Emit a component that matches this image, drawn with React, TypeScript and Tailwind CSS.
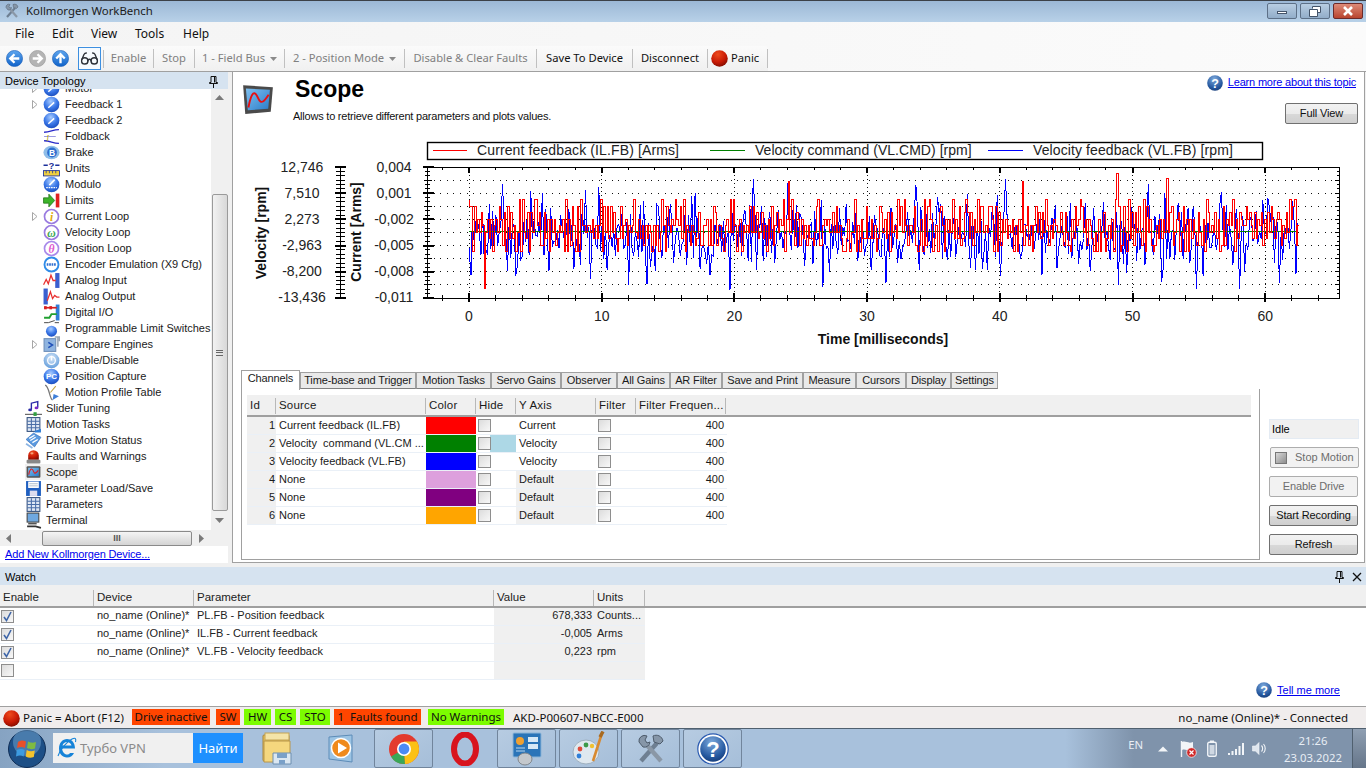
import React from 'react'
import { Glasses } from 'lucide-react'

const SANS = "font-['Liberation_Sans',sans-serif]"
const UI = "font-['Noto_Sans',sans-serif]"

// seeded noise so the traces stay the same between runs
function makeRand(seed: number) {
  let a = seed
  return () => {
    a |= 0
    a = (a + 0x6d2b79f5) | 0
    let t = Math.imul(a ^ (a >>> 15), 1 | a)
    t = (t + Math.imul(t ^ (t >>> 7), 61 | t)) ^ t
    return ((t ^ (t >>> 14)) >>> 0) / 4294967296
  }
}

const X0 = 469
const PX_MS = 13.27
const END = 1298

function buildTraces() {
  const r = makeRand(77)
  const gauss = () => (r() + r() + r() + r() - 2) * 1.73
  let red = 'M469 200'
  let blue = 'M469 248 L470 262 L471 275'
  let redSide = 1
  let blueSide = 1
  for (let x = 471; x < END; x += 1.66) {
    if (r() < 0.8) redSide = -redSide
    let level = Math.round(-0.6 + redSide * Math.abs(gauss()) * 2.6)
    level = Math.max(-5, Math.min(3, level))
    let yr = 232 + level * 6.5
    const s = r()
    if (s < 0.008) yr = 173 + r() * 10
    else if (s < 0.014) yr = 268 + r() * 25
    red += ` V${yr.toFixed(1)} H${(x + 1.66).toFixed(1)}`
    if (r() < 0.7) blueSide = -blueSide
    let yb = 234 + blueSide * Math.abs(gauss()) * 20
    const q = r()
    if (q < 0.02) yb = 268 + r() * 25
    else if (q < 0.03) yb = 174 + r() * 22
    yb = Math.max(174, Math.min(293, yb))
    blue += ` L${x.toFixed(1)} ${yb.toFixed(1)}`
  }
  return { red, blue }
}

const traces = buildTraces()

function Chart() {
  const left = 427, right = 1339, top = 167, bottom = 298
  const step = (bottom - top) / 10
  const ySteps = Array.from({ length: 11 }, (_, i) => top + i * step)
  const xMajor = [0, 10, 20, 30, 40, 50, 60].map((v) => X0 + v * PX_MS)
  const xMinor = Array.from({ length: 35 }, (_, i) => X0 + (i - 1) * 2 * PX_MS).filter((x) => x < right)
  const fine = Array.from({ length: 60 }, (_, i) => top + (i * (bottom - top)) / 30).filter((y) => y <= bottom)
  const vel = ['12,746', '7,510', '2,273', '-2,963', '-8,200', '-13,436']
  const cur = ['0,004', '0,001', '-0,002', '-0,005', '-0,008', '-0,011']
  return (
    <svg width="1130" height="225" viewBox="233 130 1130 225" className={`block ${SANS}`}>
      {/* legend */}
      <rect x="427.5" y="142.5" width="835" height="17" fill="white" stroke="black" strokeWidth="1.4" />
      <path d="M433 150.5H467" stroke="#ff0000" />
      <text x="477" y="155" fontSize="14" letterSpacing="0.12" fill="#222">Current feedback (IL.FB) [Arms]</text>
      <path d="M710 150.5H745" stroke="#008000" />
      <text x="755" y="155" fontSize="14" letterSpacing="0.04" fill="#222">Velocity command (VL.CMD) [rpm]</text>
      <path d="M988 150.5H1023" stroke="#0000ff" />
      <text x="1033" y="155" fontSize="14" letterSpacing="0.1" fill="#222">Velocity feedback (VL.FB) [rpm]</text>

      {/* y axis labels */}
      {vel.map((v, i) => (
        <text key={v} x="302" y={top + 5 + i * 26} fontSize="14" textAnchor="middle" fill="#222">{v}</text>
      ))}
      {cur.map((v, i) => (
        <text key={v} x="394" y={top + 5 + i * 26} fontSize="14" textAnchor="middle" fill="#222">{v}</text>
      ))}
      <text transform="translate(266 233) rotate(-90)" fontSize="14" fontWeight="bold" textAnchor="middle" fill="#111">Velocity [rpm]</text>
      <text transform="translate(361 232) rotate(-90)" fontSize="14" fontWeight="bold" textAnchor="middle" fill="#111">Current [Arms]</text>

      {/* velocity axis */}
      <g stroke="black" shapeRendering="crispEdges">
        <path d={`M340.5 ${top}V${bottom}`} />
        {fine.map((y, i) => (
          <path key={i} d={`M${i % 6 === 0 ? 335 : 336} ${y}H${i % 6 === 0 ? 346 : 345}`} strokeWidth={i % 6 === 0 ? 2 : 1} />
        ))}
      </g>

      {/* grid */}
      <g stroke="#111" shapeRendering="crispEdges">
        {ySteps.slice(1, -1).map((y) => (
          <path key={y} d={`M${left} ${y}H${right}`} strokeDasharray="1 5.6" />
        ))}
        {xMajor.map((x) => (
          <path key={x} d={`M${x} ${top}V${bottom}`} strokeDasharray="1 3" />
        ))}
      </g>

      {/* traces */}
      <g fill="none" strokeLinejoin="miter" shapeRendering="crispEdges">
        <path d={traces.blue} stroke="#0000ff" />
        <path d={`M${X0} 231.5H${END}`} stroke="#008000" />
        <path d={traces.red} stroke="#ff0000" />
      </g>

      {/* frame and ticks */}
      <g stroke="black" shapeRendering="crispEdges">
        <path d={`M423 ${top}.5H${right}.5V${bottom}.5H423`} fill="none" />
        <path d={`M${left}.5 ${top}V${bottom}`} />
        {ySteps.map((y, i) => (
          <path key={y} d={`M${i % 2 === 0 ? 423 : 424} ${y}H${i % 2 === 0 ? 434 : 432}`} strokeWidth={i % 2 === 0 ? 2 : 1} />
        ))}
        {fine.map((y, i) => (
          <g key={i}>
            <path d={`M425 ${y}H430`} />
            <path d={`M${i % 3 === 0 ? 1335 : 1337} ${y}H1339`} />
          </g>
        ))}
        {xMinor.map((x) => (
          <g key={x}>
            <path d={`M${x} ${bottom - 3}V${bottom + 3}`} />
            <path d={`M${x} ${top}V${top + 3}`} />
          </g>
        ))}
        {xMajor.map((x) => (
          <g key={x}>
            <path d={`M${x} ${bottom - 5}V${bottom + 4}`} strokeWidth="2" />
            <path d={`M${x} ${top}V${top + 6}`} strokeWidth="2" />
          </g>
        ))}
      </g>

      {[0, 10, 20, 30, 40, 50, 60].map((v) => (
        <text key={v} x={X0 + v * PX_MS} y="321" fontSize="14" textAnchor="middle" fill="#222">{v}</text>
      ))}
      <text x="883" y="344" fontSize="14" fontWeight="bold" textAnchor="middle" fill="#111">Time [milliseconds]</text>
    </svg>
  )
}

function Defs() {
  return (
    <svg className="absolute w-0 h-0">
      <defs>
        <radialGradient id="blueOrb" cx="45%" cy="30%" r="75%">
          <stop offset="0%" stopColor="#a8ccff" />
          <stop offset="55%" stopColor="#3b78e8" />
          <stop offset="100%" stopColor="#1546b8" />
        </radialGradient>
        <radialGradient id="paleOrb" cx="50%" cy="35%" r="70%">
          <stop offset="0%" stopColor="#dcebfb" />
          <stop offset="100%" stopColor="#5a97d8" />
        </radialGradient>
        <radialGradient id="redOrb" cx="40%" cy="25%" r="80%">
          <stop offset="0%" stopColor="#ee4a1c" />
          <stop offset="60%" stopColor="#c81a05" />
          <stop offset="100%" stopColor="#7c0c00" />
        </radialGradient>
        <radialGradient id="helpOrb" cx="45%" cy="25%" r="80%">
          <stop offset="0%" stopColor="#7da9dc" />
          <stop offset="70%" stopColor="#25589f" />
          <stop offset="100%" stopColor="#163a75" />
        </radialGradient>
        <linearGradient id="navBlue" x1="0" y1="0" x2="0" y2="1">
          <stop offset="0%" stopColor="#5fa6ee" />
          <stop offset="100%" stopColor="#0f62c9" />
        </linearGradient>
        <linearGradient id="screen" x1="0" y1="0" x2="1" y2="1">
          <stop offset="0%" stopColor="#7fc0f0" />
          <stop offset="100%" stopColor="#2a7cc8" />
        </linearGradient>
      </defs>
    </svg>
  )
}

function Ring({ color, ch, fg }: { color: string; ch: string; fg: string }) {
  return (
    <>
      <circle cx="8" cy="8" r="6.6" fill="white" stroke={color} strokeWidth="1.6" />
      <text x="8" y="12" fontSize="11" fontWeight="bold" fontStyle="italic" textAnchor="middle" fill={fg} fontFamily="Liberation Serif">{ch}</text>
    </>
  )
}

const dial = (
  <>
    <circle cx="8" cy="8" r="7.4" fill="url(#blueOrb)" />
    <path d="M5 11L10.5 6" stroke="white" strokeWidth="1.4" />
  </>
)

const table = (
  <>
    <rect x="2" y="1.5" width="12" height="13" fill="#dfe8f5" stroke="#36527f" />
    <path d="M2 5H14M2 8H14M2 11H14M6 2V14M10 2V14" stroke="#4a6ea8" />
  </>
)

const monitor = (
  <>
    <rect x="1.5" y="2" width="13" height="11" rx="1" fill="#555" />
    <rect x="3" y="3.5" width="10" height="8" fill="url(#screen)" />
    <path d="M3.5 10C5 3 7 4 8 7S11 8 12.5 6" fill="none" stroke="#e02020" strokeWidth="1.1" />
  </>
)

const TREE_ICONS: Record<string, React.ReactNode> = {
  dial,
  foldback: (
    <>
      <path d="M1 4C7 4 9 1.5 15 1.5M1 12C7 12 9 14.5 15 14.5" fill="none" stroke="#2a2ac8" strokeWidth="1.2" />
      <path d="M1 8H12" stroke="#8888dd" strokeWidth="0.8" />
      <text x="3" y="12" fontSize="8" fontStyle="italic" fill="#b8a820" fontFamily="Liberation Serif">I</text>
    </>
  ),
  brake: (
    <>
      <ellipse cx="8" cy="8" rx="7.6" ry="6.4" fill="#8fbde8" />
      <circle cx="8.5" cy="8" r="4.6" fill="#2f6fd0" />
      <text x="8.5" y="11" fontSize="8" fontWeight="bold" textAnchor="middle" fill="white" fontFamily="Liberation Sans">B</text>
    </>
  ),
  units: (
    <>
      <text x="8" y="8" fontSize="9" fontWeight="bold" textAnchor="middle" fill="#1a2f9a" fontFamily="Liberation Sans">?</text>
      <path d="M0.5 5H4.5M11.5 5H15.5" stroke="#1a2f9a" strokeWidth="1.4" />
      <rect x="0.5" y="10" width="15" height="5" fill="#f0d040" stroke="#1a2f9a" strokeWidth="0.8" />
      <path d="M3 10V12.5M6 10V12.5M9 10V12.5M12 10V12.5" stroke="#1a2f9a" strokeWidth="0.7" />
    </>
  ),
  modulo: (
    <>
      <circle cx="8" cy="8" r="7.4" fill="url(#blueOrb)" />
      <path d="M6 8.5L11 3.5" stroke="white" strokeWidth="1.6" />
      <path d="M3 11H13" stroke="white" strokeWidth="1.2" strokeDasharray="1.5 0.8" />
    </>
  ),
  limits: (
    <>
      <path d="M0.5 5.5H5.5V2L11 8L5.5 14V10.5H0.5Z" fill="#3cb52a" stroke="#1f6f14" strokeWidth="0.7" />
      <rect x="12" y="1.5" width="3.4" height="13" fill="#e02020" />
    </>
  ),
  current: <Ring color="#9a7be0" ch="i" fg="#e2a90e" />,
  velocity: <Ring color="#9a7be0" ch="ω" fg="#3aa655" />,
  position: <Ring color="#a98aea" ch="θ" fg="#e05ad0" />,
  encoder: (
    <>
      <circle cx="8" cy="8" r="6.6" fill="white" stroke="#2f8be8" strokeWidth="1.8" />
      <path d="M3.5 8H12.5" stroke="#2f6fd0" strokeWidth="2.4" strokeDasharray="1.6 0.7" />
    </>
  ),
  analogIn: (
    <>
      <rect x="11.5" y="1" width="4" height="14" fill="#3a5fd0" />
      <path d="M0.5 12L3 7L5 11L7.5 3L9.5 8H12" fill="none" stroke="#e83030" strokeWidth="1.2" />
    </>
  ),
  analogOut: (
    <>
      <rect x="0.5" y="0.5" width="4" height="15" fill="#3a5fd0" />
      <path d="M4 12L7 3.5L9 10L11 7L13 8.5H15.5" fill="none" stroke="#e83030" strokeWidth="1.2" />
    </>
  ),
  digital: (
    <>
      <rect x="12" y="0.5" width="3.5" height="15" fill="#2f7fd8" />
      <path d="M1 3.5H13" stroke="#d82020" strokeWidth="1.6" />
      <rect x="1" y="2" width="2.5" height="3" fill="#d82020" />
      <rect x="6" y="2" width="2.5" height="3" fill="#d82020" />
      <path d="M1 13H6L8 9.5H13" fill="none" stroke="#20a030" strokeWidth="1.8" />
    </>
  ),
  pls: (
    <>
      <path d="M1 2.5H5L11 0.5M11 2.5H15" fill="none" stroke="#444" strokeWidth="0.9" />
      <circle cx="8" cy="10.5" r="5.2" fill="url(#blueOrb)" />
    </>
  ),
  compare: (
    <>
      <rect x="1" y="2.5" width="11" height="12" fill="#8fb4e0" stroke="#6f8fb8" />
      <path d="M5 6L9 8.5L5 11" fill="none" stroke="#2050b8" strokeWidth="1.4" />
      <path d="M11 1H15.5V5M14 1V10" fill="none" stroke="#9aa6b4" strokeWidth="1.4" />
    </>
  ),
  enable: (
    <>
      <circle cx="8" cy="8" r="7.4" fill="url(#paleOrb)" />
      <circle cx="8" cy="8" r="3.6" fill="none" stroke="white" strokeWidth="1.2" />
      <path d="M8 3.5V8" stroke="white" strokeWidth="1.2" />
    </>
  ),
  capture: (
    <>
      <circle cx="8" cy="8" r="7.4" fill="url(#blueOrb)" />
      <text x="8" y="10.8" fontSize="7.5" fontWeight="bold" textAnchor="middle" fill="white" fontFamily="Liberation Sans">PC</text>
    </>
  ),
  profile: (
    <>
      <path d="M2 1C6 2 6 14 9 15" fill="none" stroke="#777" strokeWidth="1.2" />
      <path d="M7 8L12 2" stroke="#c0a040" strokeWidth="1" />
      <path d="M9 15L15 11.5L10 9.5Z" fill="#3f7fd8" />
    </>
  ),
  slider: (
    <>
      <path d="M6 9V3L12 1.5V7" fill="none" stroke="#2a2aa8" strokeWidth="1.3" />
      <ellipse cx="4.8" cy="9.3" rx="1.8" ry="1.3" fill="#2a2aa8" />
      <ellipse cx="10.8" cy="7.5" rx="1.8" ry="1.3" fill="#7a2ac8" />
      <path d="M0 13.5H16" stroke="#555" />
      <rect x="8" y="11.5" width="3" height="3.5" fill="#30a040" />
    </>
  ),
  tasks: (
    <>
      {table}
      <path d="M9 14L15 12V15.5L9 15.5Z" fill="#2f7fd8" />
    </>
  ),
  drive: (
    <>
      <path d="M1 7L8 1L15 5L9 14Z" fill="#5a9ae0" stroke="#3a6fb8" strokeWidth="0.6" />
      <path d="M4 6L9 3M5 8L10 5M7 10L12 7" stroke="white" strokeWidth="1.2" />
      <path d="M1 11L7 15" stroke="#8ab4e4" strokeWidth="1.6" />
    </>
  ),
  faults: (
    <>
      <path d="M3 11V7A5 5 0 0 1 13 7V11Z" fill="url(#redOrb)" />
      <ellipse cx="6.5" cy="5" rx="1.5" ry="1" fill="#f5a07a" />
      <rect x="1.5" y="11" width="13" height="3.6" rx="1" fill="#888" />
    </>
  ),
  scope: monitor,
  save: (
    <>
      <rect x="1" y="1" width="14" height="14" fill="#1f5fc0" />
      <rect x="3" y="1.5" width="10" height="6" fill="white" />
      <path d="M4 3.5H12M4 5.5H12" stroke="#9ab" strokeWidth="0.7" />
      <rect x="4.5" y="10" width="7" height="5" fill="#dde" />
    </>
  ),
  params: table,
  terminal: (
    <>
      <rect x="2" y="1" width="11" height="8.5" fill="#6fa8e0" stroke="#444" />
      <path d="M3 11H11" stroke="#555" strokeWidth="1.4" />
      <path d="M2 13.5H10L15 15" fill="none" stroke="#333" strokeWidth="1.6" />
    </>
  ),
}

const TREE: { label: string; level: 1 | 2; icon: string; exp?: boolean; sel?: boolean }[] = [
  { label: 'Motor', level: 2, icon: 'dial', exp: true },
  { label: 'Feedback 1', level: 2, icon: 'dial', exp: true },
  { label: 'Feedback 2', level: 2, icon: 'dial' },
  { label: 'Foldback', level: 2, icon: 'foldback' },
  { label: 'Brake', level: 2, icon: 'brake' },
  { label: 'Units', level: 2, icon: 'units' },
  { label: 'Modulo', level: 2, icon: 'modulo' },
  { label: 'Limits', level: 2, icon: 'limits' },
  { label: 'Current Loop', level: 2, icon: 'current', exp: true },
  { label: 'Velocity Loop', level: 2, icon: 'velocity' },
  { label: 'Position Loop', level: 2, icon: 'position' },
  { label: 'Encoder Emulation (X9 Cfg)', level: 2, icon: 'encoder' },
  { label: 'Analog Input', level: 2, icon: 'analogIn' },
  { label: 'Analog Output', level: 2, icon: 'analogOut' },
  { label: 'Digital I/O', level: 2, icon: 'digital' },
  { label: 'Programmable Limit Switches', level: 2, icon: 'pls' },
  { label: 'Compare Engines', level: 2, icon: 'compare', exp: true },
  { label: 'Enable/Disable', level: 2, icon: 'enable' },
  { label: 'Position Capture', level: 2, icon: 'capture' },
  { label: 'Motion Profile Table', level: 2, icon: 'profile' },
  { label: 'Slider Tuning', level: 1, icon: 'slider' },
  { label: 'Motion Tasks', level: 1, icon: 'tasks' },
  { label: 'Drive Motion Status', level: 1, icon: 'drive' },
  { label: 'Faults and Warnings', level: 1, icon: 'faults' },
  { label: 'Scope', level: 1, icon: 'scope', sel: true },
  { label: 'Parameter Load/Save', level: 1, icon: 'save' },
  { label: 'Parameters', level: 1, icon: 'params' },
  { label: 'Terminal', level: 1, icon: 'terminal' },
]

function Tri({ dir, className = '' }: { dir: 'up' | 'down' | 'left' | 'right'; className?: string }) {
  const d = { up: 'M0 5L4.5 0L9 5Z', down: 'M0 0L9 0L4.5 5Z', left: 'M5 0V9L0 4.5Z', right: 'M0 0V9L5 4.5Z' }[dir]
  const horiz = dir === 'left' || dir === 'right'
  return (
    <svg width={horiz ? 5 : 9} height={horiz ? 9 : 5} className={className}>
      <path d={d} fill="#7a7a7a" />
    </svg>
  )
}

function TreePanel() {
  return (
    <div className="w-[228px] flex flex-col">
      <div className="h-[17px] pt-[2px] bg-[#d6e3f0] flex items-center justify-between pl-[5px] pr-[10px] text-[11px]">
        <span>Device Topology</span>
        <PinIcon />
      </div>
      <div className="h-[441px] flex bg-white">
        <div className="flex-1 overflow-hidden">
          <div className="-mt-[9px]">
            {TREE.map((t) => (
              <div key={t.label} className={`h-[16px] flex items-center relative whitespace-nowrap ${t.level === 2 ? 'pl-[43px]' : 'pl-[25px]'}`}>
                {t.exp && (
                  <svg width="6" height="9" className="absolute left-[32px]">
                    <path d="M0.5 0.5V8.5L5 4.5Z" fill="white" stroke="#a6a6a6" />
                  </svg>
                )}
                <div className={`flex items-center h-[16px] pr-[1px] ${t.sel ? 'bg-[#f0f0f0]' : ''}`}>
                  <svg width="17" height="17" viewBox="0 0 16 16" className="shrink-0">{TREE_ICONS[t.icon]}</svg>
                  <span className={`${t.level === 2 ? 'ml-[5px]' : 'ml-[4px]'} leading-[16px] text-[11px] text-[#1a1a1a]`}>{t.label}</span>
                </div>
              </div>
            ))}
          </div>
        </div>
        <div className="w-[17px] bg-[#f0f0f0] flex flex-col items-center">
          <div className="h-[17px] flex items-center justify-center"><Tri dir="up" /></div>
          <div className="mt-[88px] h-[317px] w-[16px] rounded-[2px] border border-[#9a9a9a] bg-gradient-to-r from-[#f2f2f2] to-[#d8d8d8] flex items-center justify-center">
            <div className="w-[7px] h-[6px] border-y border-[#666] [background:linear-gradient(#666,#666)_center/100%_1px_no-repeat]" />
          </div>
          <div className="flex-1 flex items-center justify-center"><Tri dir="down" /></div>
        </div>
      </div>
      <div className="h-[16px] flex bg-[#f0f0f0]">
        <div className="w-[211px] flex items-center relative">
          <Tri dir="left" className="ml-[6px]" />
          <div className="ml-[31px] w-[150px] h-[15px] rounded-[2px] border border-[#8a8a8a] bg-gradient-to-b from-[#f5f5f5] to-[#d4d4d4] text-center text-[9px] leading-[12px] text-[#555] font-bold">III</div>
          <Tri dir="right" className="ml-[7px]" />
        </div>
      </div>
      <div className="h-[17px] bg-white pl-[5px] leading-[17px] text-[11px] tracking-[-0.15px] text-[#0000ee] underline">Add New Kollmorgen Device...</div>
    </div>
  )
}

function PinIcon() {
  return (
    <svg width="9" height="12" viewBox="0 0 9 12">
      <path d="M2 0.5H7V6.5H8.5V7.5H0.5V6.5H2ZM5.5 1V6.5" fill="none" stroke="#111" />
      <path d="M4.5 8V12" stroke="#111" />
    </svg>
  )
}

function HelpIcon({ size = 16 }: { size?: number }) {
  return (
    <svg width={size} height={size} viewBox="0 0 16 16" className="shrink-0">
      <circle cx="8" cy="8" r="7.8" fill="url(#helpOrb)" />
      <text x="8" y="12.5" fontSize="12.5" fontWeight="bold" textAnchor="middle" fill="white" fontFamily="Liberation Sans">?</text>
    </svg>
  )
}

function Check({ on }: { on?: boolean }) {
  return (
    <span className="w-[13px] h-[13px] shrink-0 border border-[#8e8e8e] bg-gradient-to-br from-[#dcdcdc] to-[#f8f8f8] flex items-center justify-center">
      {on && (
        <svg width="9" height="11" viewBox="0 0 9 11">
          <path d="M1 6L3.5 9.5L8 1" fill="none" stroke="#3f66a8" strokeWidth="1.6" />
        </svg>
      )}
    </span>
  )
}

function Btn({ children, w = 'w-[89px]', off }: { children: React.ReactNode; w?: string; off?: boolean }) {
  return (
    <div
      className={`${w} h-[21px] rounded-[2px] border flex items-center justify-center text-[11px] tracking-[-0.12px] whitespace-nowrap ${
        off
          ? 'border-[#adadad] bg-[#f2f2f2] text-[#6d6d6d]'
          : 'border-[#707070] bg-[linear-gradient(#f2f2f2_0%,#ebebeb_50%,#d8d8d8_55%,#cfcfcf_100%)] text-[#111]'
      }`}
    >
      {children}
    </div>
  )
}

const TABS = [
  ['Channels', 'w-[59px]'],
  ['Time-base and Trigger', 'w-[116px]'],
  ['Motion Tasks', 'w-[75px]'],
  ['Servo Gains', 'w-[70px]'],
  ['Observer', 'w-[56px]'],
  ['All Gains', 'w-[53px]'],
  ['AR Filter', 'w-[52px]'],
  ['Save and Print', 'w-[81px]'],
  ['Measure', 'w-[53px]'],
  ['Cursors', 'w-[50px]'],
  ['Display', 'w-[45px]'],
  ['Settings', 'w-[47px]'],
]

const CHANNELS = [
  { id: 1, src: 'Current feedback (IL.FB)', color: 'bg-[#ff0000]', axis: 'Current' },
  { id: 2, src: 'Velocity  command (VL.CM ...', color: 'bg-[#008000]', axis: 'Velocity', sel: true },
  { id: 3, src: 'Velocity feedback (VL.FB)', color: 'bg-[#0000ff]', axis: 'Velocity' },
  { id: 4, src: 'None', color: 'bg-[#dda0dd]', axis: 'Default', def: true },
  { id: 5, src: 'None', color: 'bg-[#800080]', axis: 'Default', def: true },
  { id: 6, src: 'None', color: 'bg-[#ffa500]', axis: 'Default', def: true },
]

function HeadCell({ w, children }: { w: string; children: React.ReactNode }) {
  return (
    <div className={`${w} h-full flex items-center`}>
      <span className="flex-1 pl-[3px] whitespace-nowrap overflow-hidden">{children}</span>
      <span className="w-px h-[16px] bg-[#b8b8b8]" />
    </div>
  )
}

function ChannelGrid() {
  return (
    <div className="mt-[6px] mx-[5px] w-[1004px] text-[11px] text-[#1a1a1a]">
      <div className="h-[22px] pt-[2px] flex bg-[#f0f0f0] border-b-2 border-[#9f9f9f] text-[11.5px] tracking-[0.2px]">
        <HeadCell w="w-[29px]">Id</HeadCell>
        <HeadCell w="w-[150px]">Source</HeadCell>
        <HeadCell w="w-[50px]">Color</HeadCell>
        <HeadCell w="w-[40px]">Hide</HeadCell>
        <HeadCell w="w-[80px]">Y Axis</HeadCell>
        <HeadCell w="w-[40px]">Filter</HeadCell>
        <HeadCell w="w-[90px]">Filter Frequen...</HeadCell>
      </div>
      {CHANNELS.map((c) => (
        <div key={c.id} className="h-[18px] flex border-b border-[#eaf0f7] w-[480px]">
          <div className="w-[29px] bg-[#f0f0f0] text-right pr-[1px] leading-[17px]">{c.id}</div>
          <div className="w-[150px] pl-[3px] leading-[17px] whitespace-pre overflow-hidden">{c.src}</div>
          <div className={`w-[50px] ${c.color}`} />
          <div className={`w-[40px] pl-[2px] flex items-center ${c.sel ? 'bg-[linear-gradient(90deg,white_14px,#add8e6_14px)]' : ''}`}><Check /></div>
          <div className={`w-[80px] pl-[3px] leading-[17px] ${c.def ? 'bg-[#f0f0f0]' : ''}`}>{c.axis}</div>
          <div className="w-[40px] pl-[2px] flex items-center"><Check /></div>
          <div className="w-[90px] text-right pr-[2px] leading-[17px]">400</div>
        </div>
      ))}
    </div>
  )
}

function ScopePanel() {
  return (
    <div className="flex-1 mr-px border-x border-b border-[#a0a0a0] bg-white flex flex-col">
      <div className="h-[58px] flex">
        <svg width="36" height="34" viewBox="0 0 16 16" className="ml-[7px] mt-[10px]">
          <path d="M1 1.5L15 2.5L14 14L2 15Z" fill="#4a4a4a" />
          <path d="M2.3 3L13.6 3.7L12.8 12.6L3.2 13.3Z" fill="url(#screen)" />
          <path d="M3.5 12C5 4 6.5 4 8 7.5S11 9 13 6" fill="none" stroke="#e81010" strokeWidth="0.9" />
        </svg>
        <div className="ml-[19px]">
          <div className="mt-[3px] text-[23px] leading-[28px] font-bold text-black">Scope</div>
          <div className="mt-[6px] -ml-[2px] text-[11px] tracking-[-0.22px] leading-[14px] text-[#111] whitespace-nowrap">Allows to retrieve different parameters and plots values.</div>
        </div>
        <div className="ml-auto pr-[6px] flex flex-col items-end">
          <div className="mt-[3px] h-[16px] flex items-center gap-[5px] pr-[2px]">
            <HelpIcon />
            <span className="-mt-[2px] text-[11px] tracking-[-0.19px] text-[#0000ee] underline">Learn more about this topic</span>
          </div>
          <div className="mt-[12px]"><Btn w="w-[73px]">Full View</Btn></div>
        </div>
      </div>
      <Chart />
      <div className="mt-[15px] flex pl-[8px]">
        <div className="w-[1019px]">
          <div className="h-[19px] flex items-end text-[11px] tracking-[-0.12px] text-[#1a1a1a]">
            {TABS.map(([name, w], i) => (
              <div
                key={name}
                className={`${w} shrink-0 text-center whitespace-nowrap border border-[#a0a0a0] ${
                  i === 0
                    ? 'h-[20px] leading-[15px] bg-white border-b-0 relative z-10 -mb-px'
                    : 'h-[17px] leading-[15px] bg-[#e9e9e9] border-b-[#808080]'
                }`}
              >
                {name}
              </div>
            ))}
          </div>
          <div className="h-[171px] border-x border-b border-[#a0a0a0] bg-white overflow-hidden">
            <ChannelGrid />
          </div>
        </div>
        <div className="ml-[9px] w-[90px] flex flex-col items-start pt-[49px] text-[11px]">
          <div className="w-[90px] h-[20px] bg-[#f0f0f0] border border-[#e4ebf3] pl-[2px] leading-[18px]">Idle</div>
          <div className="mt-[8px] ml-px w-[89px] h-[21px] rounded-[2px] border border-[#adadad] bg-[#f2f2f2] flex items-center text-[#6d6d6d] whitespace-nowrap">
            <span className="ml-[4px] w-[12px] h-[12px] shrink-0 border border-[#777] bg-gradient-to-br from-[#d8d8d8] to-[#8e8e8e]" />
            <span className="ml-[8px]">Stop Motion</span>
          </div>
          <div className="mt-[8px]"><Btn off>Enable Drive</Btn></div>
          <div className="mt-[8px]"><Btn>Start Recording</Btn></div>
          <div className="mt-[8px]"><Btn>Refresh</Btn></div>
        </div>
      </div>
    </div>
  )
}

const WATCH = [
  { on: true, dev: 'no_name (Online)*', par: 'PL.FB - Position feedback', val: '678,333', unit: 'Counts...' },
  { on: true, dev: 'no_name (Online)*', par: 'IL.FB - Current feedback', val: '-0,005', unit: 'Arms' },
  { on: true, dev: 'no_name (Online)*', par: 'VL.FB - Velocity feedback', val: '0,223', unit: 'rpm' },
  { on: false, dev: '', par: '', val: '', unit: '' },
]

function WatchPanel() {
  return (
    <div className="h-[139px] flex flex-col">
      <div className="h-[18px] pt-[2px] bg-[#d6e3f0] flex items-center justify-between pl-[5px] pr-[4px] text-[11px]">
        <span>Watch</span>
        <div className="flex items-center gap-[8px]">
          <PinIcon />
          <svg width="10" height="10"><path d="M1 1L9 9M9 1L1 9" stroke="#111" strokeWidth="1.3" /></svg>
        </div>
      </div>
      <div className="mt-[2px] h-[21px] pt-[2px] flex bg-[#f0f0f0] border-b-2 border-[#9f9f9f] text-[11.5px] text-[#222]">
        <HeadCell w="w-[94px]">Enable</HeadCell>
        <HeadCell w="w-[100px]">Device</HeadCell>
        <HeadCell w="w-[300px]">Parameter</HeadCell>
        <HeadCell w="w-[100px]">Value</HeadCell>
        <HeadCell w="w-[51px]">Units</HeadCell>
      </div>
      <div className="flex-1 bg-white flex flex-col text-[11px] text-[#222]">
        {WATCH.map((r, i) => (
          <div key={i} className="h-[18px] w-[645px] flex border-b border-[#eaf0f7]">
            <div className="w-[94px] pl-[1px] flex items-center"><Check on={r.on} /></div>
            <div className="w-[100px] pl-[3px] leading-[15px] whitespace-nowrap">{r.dev}</div>
            <div className="w-[300px] pl-[3px] leading-[15px]">{r.par}</div>
            <div className="w-[100px] bg-[#f0f0f0] text-right pr-[2px] leading-[15px]">{r.val}</div>
            <div className="w-[51px] bg-[#f0f0f0] pl-[3px] leading-[15px] whitespace-nowrap">{r.unit}</div>
          </div>
        ))}
        <div className="flex-1 flex items-center justify-end pr-[26px] pb-[6px]">
          <HelpIcon />
          <span className="ml-[5px] text-[11px] text-[#0000ee] underline">Tell me more</span>
        </div>
      </div>
    </div>
  )
}

function NavDot({ gray, rot }: { gray?: boolean; rot: number }) {
  return (
    <svg width="17" height="17" viewBox="0 0 16 16">
      <circle cx="8" cy="8" r="7.6" fill={gray ? '#b4b4b4' : 'url(#navBlue)'} stroke={gray ? '#999' : '#1b5fb8'} strokeWidth="0.6" />
      <path d="M12.5 8H4.5M8 4L4 8L8 12" transform={`rotate(${rot} 8 8)`} fill="none" stroke="white" strokeWidth="2.2" />
    </svg>
  )
}

function Caret() {
  return <svg width="7" height="4" className="ml-[5px]"><path d="M0 0H7L3.5 4Z" fill="#8a8a8a" /></svg>
}

const TOOLS = [
  { label: 'Enable', w: 'w-[50px]', off: true },
  { label: 'Stop', w: 'w-[41px]', off: true },
  { label: '1 - Field Bus', w: 'w-[90px]', off: true, caret: true },
  { label: '2 - Position Mode', w: 'w-[120px]', off: true, caret: true },
  { label: 'Disable & Clear Faults', w: 'w-[132px]', off: true },
  { label: 'Save To Device', w: 'w-[96px]' },
  { label: 'Disconnect', w: 'w-[75px]' },
]

function RedDot() {
  return (
    <svg width="17" height="17" viewBox="0 0 16 16" className="shrink-0">
      <circle cx="8" cy="8" r="7.8" fill="url(#redOrb)" />
    </svg>
  )
}

function ToolsGlyph({ size }: { size: number }) {
  return (
    <svg width={size} height={size} viewBox="0 0 16 16" className="shrink-0">
      <path d="M3 14L11 5" stroke="#6e7f92" strokeWidth="2.2" />
      <path d="M9 1.5C11 0.5 13.5 1.5 14 4L12.5 5.5L9.5 4.5Z" fill="#8696a8" stroke="#4e5c6c" strokeWidth="0.5" />
      <path d="M13 14L5 5" stroke="#8a97a6" strokeWidth="2.2" />
      <path d="M2 4.5A2.8 2.8 0 0 1 6 1.5L5 3.5L6 5L7.5 4.5A2.8 2.8 0 0 1 4 7Z" fill="#8696a8" stroke="#4e5c6c" strokeWidth="0.5" />
    </svg>
  )
}

function TaskBtn({ framed, children, w = 'w-[59px]' }: { framed?: boolean; children: React.ReactNode; w?: string }) {
  return (
    <div className={`${w} h-[39px] shrink-0 flex items-center justify-center rounded-[2px] ${framed ? 'border border-[#71859c] bg-gradient-to-br from-[#bdd0e4]/70 to-[#a2bad4]/40' : ''}`}>
      {children}
    </div>
  )
}

function Taskbar() {
  return (
    <div className="h-[40px] flex border-t border-[#50606f] bg-[linear-gradient(90deg,#86a3c2_0%,#a8c1dc_12%,#a8c1dc_78%,#7f93ab_83%,#7f93ab_100%)]">
      <div className="w-[53px] shrink-0 flex items-center justify-center">
        <svg width="38" height="38" viewBox="0 0 38 38">
          <circle cx="19" cy="19" r="18.5" fill="#1d4f86" stroke="#0f2d55" />
          <circle cx="19" cy="12" r="14" fill="#7fb2dc" opacity="0.45" />
          <path d="M10 12C13 10 15 10 18 11.5L17 18C14.5 16.5 12 16.5 9 18Z" fill="#e8502a" />
          <path d="M20 11.5C23 13 25 13 28 12L27 18.5C24 19.5 22 19.5 19 18Z" fill="#7ebb42" />
          <path d="M8.8 20C12 18.5 14 18.5 16.7 20L15.7 26.5C13 25 11 25 8 26.5Z" fill="#3d9be0" />
          <path d="M18.7 20C21.5 21.5 24 21.5 26.8 20.5L25.8 27C23 28 20.5 28 17.7 26.5Z" fill="#f4c22c" />
        </svg>
      </div>
      <div className="w-[190px] h-[30px] mt-[4px] shrink-0 flex bg-[#f0f0f0]">
        <svg width="20" height="24" viewBox="0 0 20 24" className="ml-[4px] mt-[3px]">
          <path d="M5 12.5H18C18 6 14 3 10 3C5.5 3 2 7 2 12.5C2 18 5.5 21.5 10 21.5C13.5 21.5 16 19.5 17 17H13C12.2 18 11.2 18.5 10 18.5C7.5 18.5 5.5 16 5 12.5ZM5.5 9.5C6 7.5 8 6 10 6C12 6 14 7.5 14.5 9.5Z" fill="#1683d8" />
          <path d="M1 20C3 14 9 6 15 3C18 1.5 19.5 2 18.5 6" fill="none" stroke="#1683d8" strokeWidth="1.1" />
        </svg>
        <span className={`ml-[3px] ${UI} text-[13px] leading-[30px] text-[#8b8b8b] whitespace-nowrap`}>Турбо VPN</span>
        <span className={`ml-auto w-[50px] bg-[#1e90ff] text-white text-center ${UI} text-[13px] leading-[30px]`}>Найти</span>
      </div>
      <div className="ml-[14px] flex">
        <TaskBtn w="w-[40px]">
          <svg width="32" height="34" viewBox="0 0 32 34">
            <rect x="2" y="3" width="26" height="26" rx="1" fill="#e8c25c" stroke="#a8853a" />
            <rect x="4" y="1" width="24" height="7" fill="#f4e4a8" stroke="#c4a455" />
            <path d="M3 9H29V30H3Z" fill="#f5d77e" stroke="#b8964a" />
            <path d="M12 21H30V32H12Z" fill="#dbe7f2" stroke="#6d8fb0" />
            <path d="M16 21V26H26V21M18 32V28H24V32" fill="#7aa0c8" />
          </svg>
        </TaskBtn>
        <div className="ml-[29px] w-[53px] h-[39px] shrink-0 flex items-center">
          <svg width="32" height="32" viewBox="0 0 32 32" className="shrink-0">
            <path d="M3 4L26 2V29L3 26Z" fill="#9cc4e4" stroke="#5d8cb8" />
            <circle cx="15" cy="15" r="9.5" fill="#ef8a1c" stroke="#fff" strokeWidth="1.5" />
            <path d="M12 9.5L21 15L12 20.5Z" fill="white" />
          </svg>
        </div>
        <div className="-ml-[5px] flex">
          <TaskBtn framed>
            <svg width="32" height="32" viewBox="0 0 32 32">
              <circle cx="16" cy="16" r="15" fill="#e33b2e" />
              <path d="M16 16L3 23.5A15 15 0 0 0 17 31Z" fill="#3aa757" />
              <path d="M16 16L17 31A15 15 0 0 0 29 8.5H16Z" fill="#fbc116" />
              <circle cx="16" cy="16" r="7" fill="white" />
              <circle cx="16" cy="16" r="5.4" fill="#4a8af4" />
            </svg>
          </TaskBtn>
          <TaskBtn w="w-[64px]">
            <svg width="28" height="34" viewBox="0 0 28 34">
              <ellipse cx="14" cy="17" rx="11" ry="14.5" fill="none" stroke="#d8141e" strokeWidth="6" />
            </svg>
          </TaskBtn>
          <TaskBtn framed>
            <svg width="32" height="34" viewBox="0 0 32 34">
              <rect x="2" y="1" width="28" height="24" rx="1" fill="#2a74b8" stroke="#8ab4d8" />
              <circle cx="9" cy="9" r="4" fill="#f0a030" />
              <path d="M17 5H27V10H17ZM17 12H27V17H17Z" fill="#d6e8f6" />
              <path d="M5 16H14M5 19H14" stroke="#b8d6ee" />
              <ellipse cx="14" cy="27" rx="7" ry="6" fill="#c4c8cc" stroke="#80868c" />
            </svg>
          </TaskBtn>
          <div className="ml-[3px]">
            <TaskBtn framed>
              <svg width="34" height="36" viewBox="0 0 34 36">
                <ellipse cx="14" cy="21" rx="13" ry="12" fill="#dfe8ef" stroke="#9fb0bf" />
                <circle cx="8" cy="18" r="2.4" fill="#e04b3a" />
                <circle cx="14" cy="14" r="2.4" fill="#3c9a4a" />
                <circle cx="7" cy="25" r="2.4" fill="#2f7fd8" />
                <circle cx="20" cy="15" r="2.2" fill="#f0c030" />
                <path d="M30 2L21 30" stroke="#d88a30" strokeWidth="2.6" />
                <path d="M31 0.5L28 6" stroke="#a86a20" strokeWidth="3.4" />
              </svg>
            </TaskBtn>
          </div>
          <div className="ml-[3px]">
            <TaskBtn framed><ToolsGlyph size={32} /></TaskBtn>
          </div>
          <div className="ml-[3px]">
            <TaskBtn framed>
              <svg width="32" height="32" viewBox="0 0 16 16">
                <circle cx="8" cy="8" r="7.6" fill="white" stroke="#2a5ab0" strokeWidth="0.6" />
                <circle cx="8" cy="8" r="6.4" fill="url(#helpOrb)" />
                <text x="8" y="12" fontSize="11" fontWeight="bold" textAnchor="middle" fill="white" fontFamily="Liberation Sans">?</text>
              </svg>
            </TaskBtn>
          </div>
        </div>
      </div>
      <div className={`ml-auto flex items-center ${UI} text-[11.3px] text-[#e8eef5]`}>
        <span className="mr-[15px] -mt-[6px]">EN</span>
        <svg width="10" height="6" className="mr-[12px]"><path d="M0 5.5L5 0.5L10 5.5Z" fill="#f2f5f8" /></svg>
        <svg width="17" height="18" viewBox="0 0 17 18" className="mr-[10px]">
          <path d="M1.5 1V17" stroke="#f2f5f8" strokeWidth="1.4" />
          <path d="M2 2C6 0.5 8 4 13 2V10C8 12 6 8.5 2 10Z" fill="#f2f5f8" />
          <circle cx="11.5" cy="12.5" r="4.8" fill="#d02828" stroke="white" strokeWidth="0.7" />
          <path d="M9.5 10.5L13.5 14.5M13.5 10.5L9.5 14.5" stroke="white" strokeWidth="1.2" />
        </svg>
        <svg width="10" height="17" className="mr-[11px]">
          <rect x="3" y="0.5" width="4" height="2" fill="#f2f5f8" />
          <rect x="0.75" y="2.25" width="8.5" height="14" rx="1.5" fill="none" stroke="#f2f5f8" strokeWidth="1.4" />
          <rect x="2.5" y="5" width="5" height="9.5" fill="#cfd8e2" />
        </svg>
        <svg width="16" height="12" className="mr-[8px]">
          <path d="M0 12V10H2V12ZM3.5 12V8H5.5V12ZM7 12V6H9V12ZM10.5 12V3H12.5V12ZM14 12V0H16V12Z" fill="#f2f5f8" />
        </svg>
        <svg width="15" height="15" viewBox="0 0 15 15" className="mr-[15px]">
          <path d="M0.5 5H3.5L7 1.5V13.5L3.5 10H0.5Z" fill="#dfe6ee" stroke="#f2f5f8" strokeWidth="0.6" />
          <path d="M9.5 4.5C11 6 11 9 9.5 10.5M11.5 3C13.8 5.5 13.8 9.5 11.5 12" fill="none" stroke="#f2f5f8" strokeWidth="1.1" />
        </svg>
        <div className="w-[62px] text-center leading-[17px] whitespace-nowrap">
          <div>21:26</div>
          <div>23.03.2022</div>
        </div>
        <div className="ml-[8px] w-[14px] h-[39px] border-l border-[#50606f] bg-gradient-to-b from-[#8f9fb2] to-[#66768a]" />
      </div>
    </div>
  )
}

export default function App() {
  return (
    <div className={`relative w-[1366px] h-[768px] overflow-hidden flex flex-col bg-[#f0f0f0] ${SANS} text-black`}>
      <Defs />
      {/* title bar */}
      <div className="h-[22px] flex border-t border-[#3c4148] bg-gradient-to-b from-[#9cb8d6] to-[#b8d1e8]">
        <div className="ml-[4px] mt-[2px]"><ToolsGlyph size={16} /></div>
        <span className={`ml-[6px] ${UI} text-[11.4px] leading-[20px] text-[#1a1a1a]`}>Kollmorgen WorkBench</span>
        <div className="ml-auto mr-[3px] mt-[2px] flex gap-[3px]">
          <div className="w-[30px] h-[16px] rounded-[2px] border border-[#5d7087] bg-gradient-to-b from-[#b8cde2] to-[#92adc9] flex items-center justify-center">
            <span className="w-[10px] h-[3px] mt-[3px] bg-white border border-[#44546a]" />
          </div>
          <div className="w-[30px] h-[16px] rounded-[2px] border border-[#5d7087] bg-gradient-to-b from-[#b8cde2] to-[#92adc9] flex items-center justify-center">
            <svg width="12" height="11"><path d="M3.5 2.5V0.5H11.5V6.5H8.5M0.5 3.5H8.5V10.5H0.5Z" fill="white" stroke="#44546a" /></svg>
          </div>
          <div className="w-[30px] h-[16px] rounded-[2px] border border-[#6b2a2a] bg-gradient-to-b from-[#dd8a78] to-[#b8432e] flex items-center justify-center">
            <svg width="12" height="10"><path d="M2 1L10 9M10 1L2 9" stroke="white" strokeWidth="2.6" /></svg>
          </div>
        </div>
      </div>
      {/* menu */}
      <div className={`h-[24px] flex items-center bg-gradient-to-r from-[#f4f4f4] to-[#fbfbfb] ${UI} text-[12px] text-[#111]`}>
        <span className="ml-[15px] w-[37px]">File</span>
        <span className="w-[39px]">Edit</span>
        <span className="w-[44px]">View</span>
        <span className="w-[48px]">Tools</span>
        <span>Help</span>
      </div>
      {/* toolbar */}
      <div className="h-[26px] border-b border-[#a0a0a0] bg-gradient-to-r from-[#f4f4f4] to-[#fbfbfb]">
        <div className={`w-[768px] h-[25px] flex items-center rounded-tr-[4px] bg-gradient-to-b from-[#fbfbfb] to-[#f0f0f0] ${UI} text-[11.2px]`}>
          <div className="ml-[6px]"><NavDot rot={0} /></div>
          <div className="ml-[6px]"><NavDot gray rot={180} /></div>
          <div className="ml-[6px]"><NavDot rot={90} /></div>
          <div className="ml-[9px] w-[23px] h-[23px] border border-[#3d8fe0] bg-[#f5fafe] flex items-center justify-center">
            <Glasses size={19} strokeWidth={1.7} color="#2a3038" />
          </div>
          <span className="ml-[2px] w-px h-[18px] bg-[#c0c0c0]" />
          {TOOLS.map((t) => (
            <div key={t.label} className={`${t.w} h-[19px] shrink-0 border-r border-[#c0c0c0] flex items-center justify-center whitespace-nowrap ${t.off ? 'text-[#808080]' : 'text-[#111]'}`}>
              {t.label}
              {t.caret && <Caret />}
            </div>
          ))}
          <div className="w-[60px] h-[19px] shrink-0 border-r border-[#c0c0c0] flex items-center pl-[3px] text-[#111]">
            <RedDot />
            <span className="ml-[3px]">Panic</span>
          </div>
        </div>
      </div>
      {/* main */}
      <div className="h-[491px] flex">
        <TreePanel />
        <div className="w-[4px]" />
        <ScopePanel />
      </div>
      <div className="h-[4px]" />
      <WatchPanel />
      {/* status */}
      <div className="h-[22px] pt-px flex items-center border-t border-[#a0a0a0] bg-[#f0eded] text-[12px] text-[#111] whitespace-nowrap">
        <div className="ml-[3px]"><RedDot /></div>
        <span className={`ml-[3px] w-[109px] ${UI} text-[11.5px]`}>Panic = Abort (F12)</span>
        <div className={`flex ${UI} text-[11.5px]`}>
          <span className="w-[78px] h-[16px] leading-[16px] text-center bg-[#ff4500]">Drive inactive</span>
          <span className="ml-[6px] w-[24px] h-[16px] leading-[16px] text-center bg-[#ff4500]">SW</span>
          <span className="ml-[4px] w-[27px] h-[16px] leading-[16px] text-center bg-[#7cfc00]">HW</span>
          <span className="ml-[4px] w-[21px] h-[16px] leading-[16px] text-center bg-[#7cfc00]">CS</span>
          <span className="ml-[4px] w-[30px] h-[16px] leading-[16px] text-center bg-[#7cfc00]">STO</span>
          <span className="ml-[4px] w-[87px] h-[16px] leading-[16px] text-center bg-[#ff4500] whitespace-pre">1  Faults found</span>
          <span className="ml-[7px] w-[76px] h-[16px] leading-[16px] text-center bg-[#7cfc00]">No Warnings</span>
          <span className="ml-[9px]">AKD-P00607-NBCC-E000</span>
        </div>
        <span className={`ml-auto mr-[18px] ${UI} text-[11.5px]`}>no_name (Online)* - Connected</span>
      </div>
      <Taskbar />
    </div>
  )
}
